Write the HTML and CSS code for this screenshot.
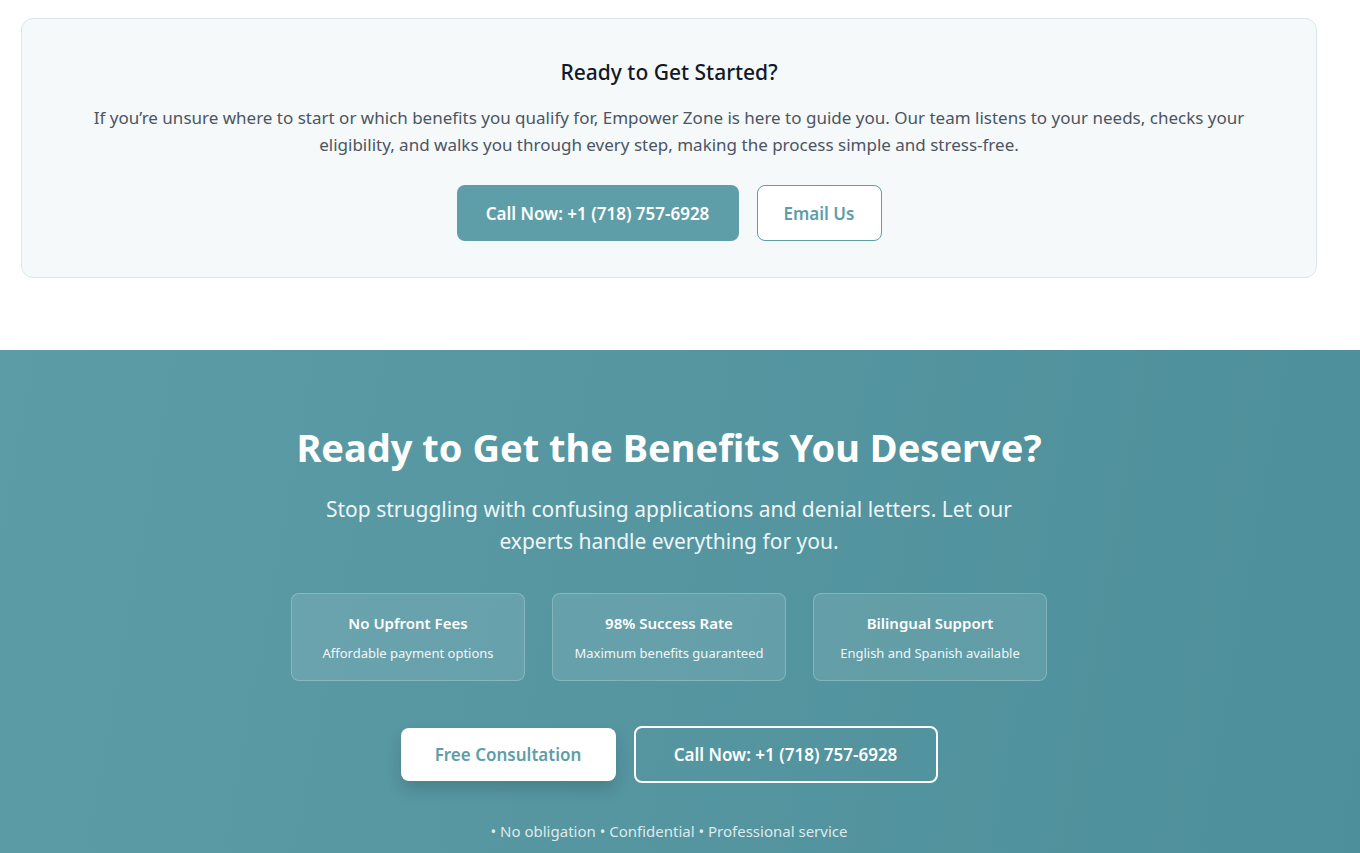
FILE: index.html
```html
<!DOCTYPE html>
<html lang="en">
<head>
<meta charset="utf-8">
<title>Empower Zone</title>
<link rel="stylesheet" href="styles.css">
</head>
<body>
<section class="start">
  <div class="start-card">
    <h2 class="start-title">Ready to Get Started?</h2>
    <p class="start-text">If you’re unsure where to start or which benefits you qualify for, Empower Zone is here to guide you. Our team listens to your needs, checks your eligibility, and walks you through every step, making the process simple and stress-free.</p>
    <div class="start-actions">
      <a class="btn btn-solid" href="#">Call Now: +1 (718) 757-6928</a>
      <a class="btn btn-outline" href="#">Email Us</a>
    </div>
  </div>
</section>
<section class="cta">
  <h2 class="cta-title">Ready to Get the Benefits You Deserve?</h2>
  <p class="cta-sub">Stop struggling with confusing applications and denial letters. Let our experts handle everything for you.</p>
  <div class="features">
    <div class="feature">
      <div class="feature-title">No Upfront Fees</div>
      <div class="feature-text">Affordable payment options</div>
    </div>
    <div class="feature">
      <div class="feature-title">98% Success Rate</div>
      <div class="feature-text">Maximum benefits guaranteed</div>
    </div>
    <div class="feature">
      <div class="feature-title">Bilingual Support</div>
      <div class="feature-text">English and Spanish available</div>
    </div>
  </div>
  <div class="cta-actions">
    <a class="btn btn-white" href="#">Free Consultation</a>
    <a class="btn btn-ghost" href="#">Call Now: +1 (718) 757-6928</a>
  </div>
  <p class="cta-note">• No obligation • Confidential • Professional service</p>
</section>
</body>
</html>
```
FILE: styles.css
```css
* { box-sizing: border-box; }
html, body { margin: 0; padding: 0; }
body {
  font-family: "Segoe UI", "Noto Sans", "Open Sans", sans-serif;
  background: #ffffff;
  color: #111827;
}
a { text-decoration: none; }

.start {
  padding: 18px 0 0 21px;
  height: 350px;
}
.start-card {
  width: 1296px;
  height: 260px;
  background: #f5f9fa;
  border: 1px solid #dbe7ea;
  border-radius: 12px;
  padding: 39px 40px 0;
  text-align: center;
}
.start-title {
  margin: 0;
  font-size: 21px;
  font-weight: 500;
  line-height: 28px;
  color: #111827;
}
.start-text {
  margin: 18px auto 0;
  max-width: 1160px;
  font-size: 17px;
  line-height: 27px;
  color: #4b5563;
}
.start-actions {
  margin-top: 27px;
  display: flex;
  justify-content: center;
  gap: 18px;
}
.btn {
  display: inline-flex;
  align-items: center;
  justify-content: center;
  font-size: 17px;
  font-weight: 600;
  border-radius: 8px;
}
.btn-solid {
  width: 282px;
  height: 56px;
  background: #5e9ea8;
  color: #ffffff;
}
.btn-outline {
  width: 125px;
  height: 56px;
  border: 1px solid #5e9ea8;
  color: #5e9ea8;
  background: #ffffff;
}

.cta {
  height: 503px;
  background: linear-gradient(100deg, #5c9ca7 0%, #4d8f9a 100%);
  color: #ffffff;
  text-align: center;
  padding: 70px 22px 0 0;
}
.cta-title {
  margin: 0;
  font-size: 38px;
  font-weight: 700;
  line-height: 54px;
}
.cta-sub {
  margin: 19px auto 0;
  max-width: 700px;
  font-size: 21px;
  line-height: 32px;
  color: #eef6f7;
}
.features {
  margin-top: 36px;
  display: flex;
  justify-content: center;
  gap: 27px;
}
.feature {
  width: 234px;
  height: 88px;
  background: rgba(255, 255, 255, 0.1);
  border: 1px solid rgba(255, 255, 255, 0.22);
  border-radius: 8px;
  padding-top: 18px;
}
.feature-title {
  font-size: 15px;
  font-weight: 600;
  line-height: 22px;
}
.feature-text {
  margin-top: 10px;
  font-size: 13px;
  line-height: 18px;
  color: #f1f7f8;
}
.cta-actions {
  margin-top: 45px;
  display: flex;
  justify-content: center;
  align-items: center;
  gap: 18px;
}
.btn-white {
  width: 215px;
  height: 53px;
  background: #ffffff;
  color: #5e9ea8;
  box-shadow: 0 8px 16px rgba(0, 0, 0, 0.15);
}
.btn-ghost {
  width: 304px;
  height: 57px;
  border: 2px solid #ffffff;
  color: #ffffff;
}
.cta-note {
  margin: 37px 0 0;
  font-size: 15px;
  line-height: 22px;
  color: rgba(255, 255, 255, 0.82);
}
```
